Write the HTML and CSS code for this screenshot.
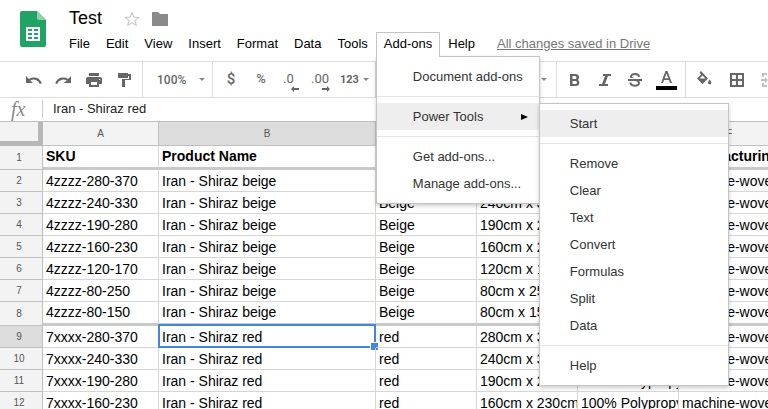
FILE: index.html
```html
<!DOCTYPE html>
<html lang="en">
<head>
<meta charset="utf-8">
<title>Test</title>
<link rel="stylesheet" href="styles.css">
</head>
<body>
<header class="top">
  <svg class="logo" viewBox="0 0 26 36" aria-hidden="true">
    <path fill="#20a463" d="M2 0h15l9 9v25a2 2 0 0 1-2 2H2a2 2 0 0 1-2-2V2a2 2 0 0 1 2-2z"/>
    <path fill="#8fd1b1" d="M17 0l9 9h-7a2 2 0 0 1-2-2z"/>
    <path fill="#fff" d="M6 16h14v14H6z"/>
    <path stroke="#20a463" stroke-width="2" d="M8 19h4m2 0h4M8 23h4m2 0h4M8 27h4m2 0h4"/>
  </svg>
  <div class="heading">
    <div class="title-row">
      <h1 class="title">Test</h1>
      <svg class="star" viewBox="0 0 16 16" aria-hidden="true"><path fill="none" stroke="#c0c0c0" d="M8 1.500l1.800 4.700 5.200.200-4.100 3.200 1.500 5L8 11.700l-4.400 2.900 1.500-5L1 6.400l5.200-.200z"/></svg>
      <svg class="folder" viewBox="0 0 16 14" aria-hidden="true"><path fill="#8a8a8a" d="M0 0h6l2 2h8v12H0z"/></svg>
    </div>
    <nav class="menubar">
      <button class="menu">File</button>
      <button class="menu">Edit</button>
      <button class="menu">View</button>
      <button class="menu">Insert</button>
      <button class="menu">Format</button>
      <button class="menu">Data</button>
      <button class="menu">Tools</button>
      <div class="menu-holder">
        <button class="menu open">Add-ons</button>
        <div class="popup addons">
          <button class="item">Document add-ons</button>
          <hr>
          <div class="sub-holder">
            <button class="item active">Power Tools<svg class="arrow" viewBox="0 0 7 6" aria-hidden="true"><path d="M0 0l7 3-7 3z"/></svg></button>
            <div class="popup tools">
              <button class="item active">Start</button>
              <hr>
              <button class="item">Remove</button>
              <button class="item">Clear</button>
              <button class="item">Text</button>
              <button class="item">Convert</button>
              <button class="item">Formulas</button>
              <button class="item">Split</button>
              <button class="item">Data</button>
              <hr>
              <button class="item">Help</button>
            </div>
          </div>
          <hr>
          <button class="item">Get add-ons...</button>
          <button class="item">Manage add-ons...</button>
        </div>
      </div>
      <button class="menu">Help</button>
      <a class="saved" href="#">All changes saved in Drive</a>
    </nav>
  </div>
</header>

<div class="toolbar">
  <div class="group history">
    <button class="tool" aria-label="Undo"><svg viewBox="0 0 18 18"><path d="M2 5v7h7L6.300 9.400A6.500 6.500 0 0 1 15.800 13l2-.700A8.500 8.500 0 0 0 4.900 7.900z"/></svg></button>
    <button class="tool" aria-label="Redo"><svg viewBox="0 0 18 18"><path d="M17 5v7h-7l2.700-2.600A6.500 6.500 0 0 0 3.200 13l-2-.700A8.500 8.500 0 0 1 14.100 7.900z"/></svg></button>
    <button class="tool" aria-label="Print"><svg viewBox="0 0 18 18"><path d="M5 2h10v3H5zM4 6h12a2 2 0 0 1 2 2v5h-3v3H5v-3H2V8a2 2 0 0 1 2-2zm3 5v3h6v-3zm8-3v1h1V8z" fill-rule="evenodd"/></svg></button>
    <button class="tool" aria-label="Paint format"><svg viewBox="0 0 18 18"><path d="M4 2h10v1h3v6h-6v7H8V8h7V5h-1v2H4z"/></svg></button>
  </div>
  <div class="group zoom">
    <button class="drop">100%<i class="caret"></i></button>
  </div>
  <div class="group formats">
    <button class="tool sign">$</button>
    <button class="tool sign percent">%</button>
    <button class="tool dec">.0<svg viewBox="0 0 8 6" aria-hidden="true"><path d="M0 3l3-3v2h5v2H3v2z"/></svg></button>
    <button class="tool dec">.00<svg viewBox="0 0 8 6" aria-hidden="true"><path d="M8 3L5 0v2H0v2h5v2z"/></svg></button>
    <button class="drop number">123<i class="caret"></i></button>
  </div>
  <div class="group font"><button class="drop" aria-label="Font"><i class="caret"></i></button></div>
  <div class="group text">
    <button class="tool" aria-label="Bold"><svg viewBox="0 0 18 18"><path fill-rule="evenodd" d="M4 3h6a3.400 3.400 0 0 1 2 6 3.300 3.300 0 0 1-1.600 6H4zm2.500 2v3H9a1.500 1.500 0 0 0 0-3zm0 5v3h3a1.500 1.500 0 0 0 0-3z"/></svg></button>
    <button class="tool" aria-label="Italic"><svg viewBox="0 0 18 18"><path d="M7 3h8v2h-3L9 13h3v2H3v-2h3l3-8H7z"/></svg></button>
    <button class="tool" aria-label="Strikethrough"><svg viewBox="0 0 18 18"><path fill="none" stroke="#666" stroke-width="2" d="M13 6c0-4-8-4-8-.500C5 9 13 8 13 12c0 4-8.500 3.500-8.500-.500"/><path stroke="#fff" d="M2 7.500h14"/><path d="M2 8h14v2H2z"/></svg></button>
    <button class="tool color" aria-label="Text color"><svg viewBox="0 0 21 20"><path fill-rule="evenodd" d="M9.500 1h2L16 13h-2l-1-3H8l-1 3H5zm1 2.500L8.700 8.300h3.600z"/><path fill="#000" d="M0 16h21v4H0z"/></svg></button>
  </div>
  <div class="group cells">
    <button class="tool" aria-label="Fill color"><svg viewBox="0 0 18 18"><path fill-rule="evenodd" d="M5 0l7 7.500L6.500 13 1 7.500l4-4-1.500-2zm1.500 4.500L3.500 7.500h6zM13.700 8.500s1.700 2 1.700 3.200a1.700 1.700 0 0 1-3.400 0c0-1.200 1.700-3.200 1.700-3.200z"/></svg></button>
    <button class="tool" aria-label="Borders"><svg viewBox="0 0 18 18"><path fill-rule="evenodd" d="M2 2h14v14H2zm2 2v4h4V4zm6 0v4h4V4zm-6 6v4h4v-4zm6 0v4h4v-4z"/></svg></button>
    <button class="tool faded" aria-label="Merge cells"><svg viewBox="0 0 18 18"><path d="M2 2h5v2H4v2H2zm9 0h5v4h-2V4h-3zM2 12h2v2h3v2H2zm12 0h2v4h-5v-2h3zM1 8h4V6l3 3-3 3v-2H1zm16 0h-4V6l-3 3 3 3v-2h4z"/></svg></button>
  </div>
</div>

<div class="formula">
  <label class="fx" for="fx">fx</label>
  <input id="fx" class="formula-input" value="Iran - Shiraz red">
</div>

<div class="sheet">
<table class="grid">
  <colgroup><col class="c-num"><col class="c-a"><col class="c-b"><col class="c-n"><col class="c-n"><col class="c-n"><col class="c-n"></colgroup>
  <thead><tr><th class="corner"></th><th>A</th><th class="picked">B</th><th>C</th><th>D</th><th>E</th><th>F</th></tr></thead>
  <tbody>
    <tr class="names thick"><th>1</th><td>SKU</td><td>Product Name</td><td>Color</td><td>Size</td><td>Material</td><td>Manufacturing</td></tr>
    <tr><th>2</th><td>4zzzz-280-370</td><td>Iran - Shiraz beige</td><td>Beige</td><td>280cm x 370cm</td><td>100% Polypropylene</td><td>machine-woven</td></tr>
    <tr><th>3</th><td>4zzzz-240-330</td><td>Iran - Shiraz beige</td><td>Beige</td><td>240cm x 330cm</td><td>100% Polypropylene</td><td>machine-woven</td></tr>
    <tr><th>4</th><td>4zzzz-190-280</td><td>Iran - Shiraz beige</td><td>Beige</td><td>190cm x 280cm</td><td>100% Polypropylene</td><td>machine-woven</td></tr>
    <tr><th>5</th><td>4zzzz-160-230</td><td>Iran - Shiraz beige</td><td>Beige</td><td>160cm x 230cm</td><td>100% Polypropylene</td><td>machine-woven</td></tr>
    <tr><th>6</th><td>4zzzz-120-170</td><td>Iran - Shiraz beige</td><td>Beige</td><td>120cm x 170cm</td><td>100% Polypropylene</td><td>machine-woven</td></tr>
    <tr><th>7</th><td>4zzzz-80-250</td><td>Iran - Shiraz beige</td><td>Beige</td><td>80cm x 250cm</td><td>100% Polypropylene</td><td>machine-woven</td></tr>
    <tr class="thick"><th>8</th><td>4zzzz-80-150</td><td>Iran - Shiraz beige</td><td>Beige</td><td>80cm x 150cm</td><td>100% Polypropylene</td><td>machine-woven</td></tr>
    <tr><th class="picked">9</th><td>7xxxx-280-370</td><td class="selected">Iran - Shiraz red</td><td>red</td><td>280cm x 370cm</td><td>100% Polypropylene</td><td>machine-woven</td></tr>
    <tr><th>10</th><td>7xxxx-240-330</td><td>Iran - Shiraz red</td><td>red</td><td>240cm x 330cm</td><td>100% Polypropylene</td><td>machine-woven</td></tr>
    <tr><th>11</th><td>7xxxx-190-280</td><td>Iran - Shiraz red</td><td>red</td><td>190cm x 280cm</td><td>100% Polypropylene</td><td>machine-woven</td></tr>
    <tr><th>12</th><td>7xxxx-160-230</td><td>Iran - Shiraz red</td><td>red</td><td>160cm x 230cm</td><td>100% Polypropylene</td><td>machine-woven</td></tr>
  </tbody>
</table>
</div>
</body>
</html>
```

FILE: styles.css
```css
* { box-sizing: border-box; }

body {
  margin: 0;
  height: 100vh;
  display: flex;
  flex-direction: column;
  overflow: hidden;
  background: #fff;
  color: #000;
  font: 13px "Liberation Sans", Arial, sans-serif;
}

button {
  margin: 0;
  padding: 0;
  border: 0;
  background: none;
  color: inherit;
  font: inherit;
}

svg { display: block; }

/* Document header */
.top {
  display: flex;
  flex: none;
  align-items: flex-start;
  height: 61px;
  padding-left: 20px;
}
.logo { width: 26px; height: 36px; margin-top: 11px; }
.heading { padding: 7px 0 0 15px; }
.title-row { display: flex; align-items: center; height: 25px; padding: 0 0 2px 8px; }
.title { margin: 0 22px 0 0; font-size: 18px; font-weight: 400; }
.star { width: 16px; height: 16px; margin-right: 12px; }
.folder { width: 16px; height: 14px; }

.menubar { display: flex; height: 24px; }
.menu {
  height: 24px;
  padding: 0 7px 2px;
  border: 1px solid transparent;
  border-bottom: 0;
  white-space: nowrap;
}
.menu-holder, .sub-holder { position: relative; }
.menu.open {
  position: relative;
  z-index: 3;
  height: 25px;
  padding-bottom: 3px;
  border-color: #c4c4c4;
  background: #fff;
}
.saved { margin-left: 14px; color: #777; line-height: 23px; white-space: nowrap; }

/* Drop-down menus */
.popup {
  position: absolute;
  padding: 6px 0;
  border: 1px solid #c4c4c4;
  background: #fff;
  box-shadow: 0 2px 4px rgba(0, 0, 0, .2);
}
.popup hr { margin: 6px 0; border: 0; border-top: 1px solid #e5e5e5; }
.addons { z-index: 2; top: 24px; left: 0; width: 164px; }
.tools { z-index: 4; top: 0; left: 100%; width: 190px; }
.item {
  display: flex;
  align-items: center;
  width: 100%;
  height: 27px;
  padding: 0 11px 0 36px;
  color: #333;
  white-space: nowrap;
}
.tools .item { padding-left: 30px; }
.item.active { background: #eee; }
.arrow { width: 7px; height: 6px; margin-left: auto; fill: #000; }

/* Toolbar */
.toolbar {
  display: flex;
  flex: none;
  height: 37px;
  border: solid #dcdcdc;
  border-width: 1px 0;
  color: #666;
}
.group { display: flex; flex: none; align-items: center; border-right: 1px solid #dcdcdc; }
.tool { display: flex; flex: none; justify-content: center; }
.tool svg { width: 18px; height: 18px; fill: #666; }
.history { width: 143px; padding-left: 24px; gap: 12px; }
.zoom { width: 70px; padding-left: 14px; }
.drop { display: flex; align-items: center; gap: 13px; font: 500 12px Roboto, sans-serif; }
.caret { border: solid transparent; border-width: 3px 3px 0; border-top-color: #888; }
.formats { width: 163px; padding-left: 10px; }
.sign { width: 16px; margin-right: 14px; padding-bottom: 2px; font: 500 15px Roboto, sans-serif; }
.percent { margin-right: 5px; font-size: 13px; }
.tool.dec {
  position: relative;
  width: 31px;
  justify-content: flex-start;
  padding: 0 0 2px 9px;
  font: 13px Roboto, sans-serif;
}
.tool.dec svg { position: absolute; left: 17px; bottom: -4px; width: 8px; height: 6px; }
.tool.dec + .dec { width: 35px; padding-left: 6px; }
.number { gap: 4px; font-size: 11px; font-weight: 700; }
.font { flex: 0 0 181px; justify-content: flex-end; padding-right: 9px; }
.text { width: 129px; padding-left: 9px; gap: 12px; }
.color svg { width: 21px; height: 20px; }
.cells { padding-left: 10px; gap: 14px; border: 0; }
.faded { opacity: .4; }

/* Formula bar */
.formula { display: flex; flex: none; align-items: center; height: 23px; padding-bottom: 2px; }
.fx {
  width: 43px;
  padding-left: 11px;
  border-right: 1px solid #ccc;
  color: #888;
  font: italic 20px/18px "Liberation Serif", serif;
}
.formula-input {
  flex: 1;
  min-width: 0;
  padding: 0 0 0 10px;
  border: 0;
  color: #222;
  font: inherit;
}

/* Spreadsheet */
.sheet { flex: 1; overflow: hidden; }
.grid {
  width: 780px;
  border-top: 1px solid #c0c0c0;
  border-spacing: 0;
  table-layout: fixed;
}
.c-num { width: 43px; }
.c-a { width: 116px; }
.c-b { width: 217px; }
.c-n { width: 101px; }
.grid th {
  height: 22px;
  padding: 0 4px 0 0;
  border: solid #c0c0c0;
  border-width: 0 1px 1px 0;
  background: #f3f3f3;
  color: #555;
  font-size: 10px;
  font-weight: 400;
}
.grid thead th { height: 24px; padding: 0; }
.grid .corner { border-width: 0 5px 5px 0; border-color: #b7b7b7; }
.grid .picked { background: #dcdcdc; }
.grid td {
  position: relative;
  padding: 0 3px;
  overflow: hidden;
  border: solid #d6d6d6;
  border-width: 0 1px 1px 0;
  font-size: 14px;
  line-height: 16px;
  white-space: nowrap;
}
.grid .thick th { height: 24px; }
.grid .thick td { padding-bottom: 2px; border-bottom: 3px solid #c9c9c9; }
.grid .names td { font-weight: 700; }
.grid td.selected { overflow: visible; }
.selected::before {
  content: "";
  position: absolute;
  inset: -2px -1px -1px -1px;
  border: 2px solid #4285e4;
}
.selected::after {
  content: "";
  position: absolute;
  right: -3px;
  bottom: -3px;
  width: 7px;
  height: 7px;
  border: solid #fff;
  border-width: 1px 0 0 1px;
  background: #4285e4;
}
```
